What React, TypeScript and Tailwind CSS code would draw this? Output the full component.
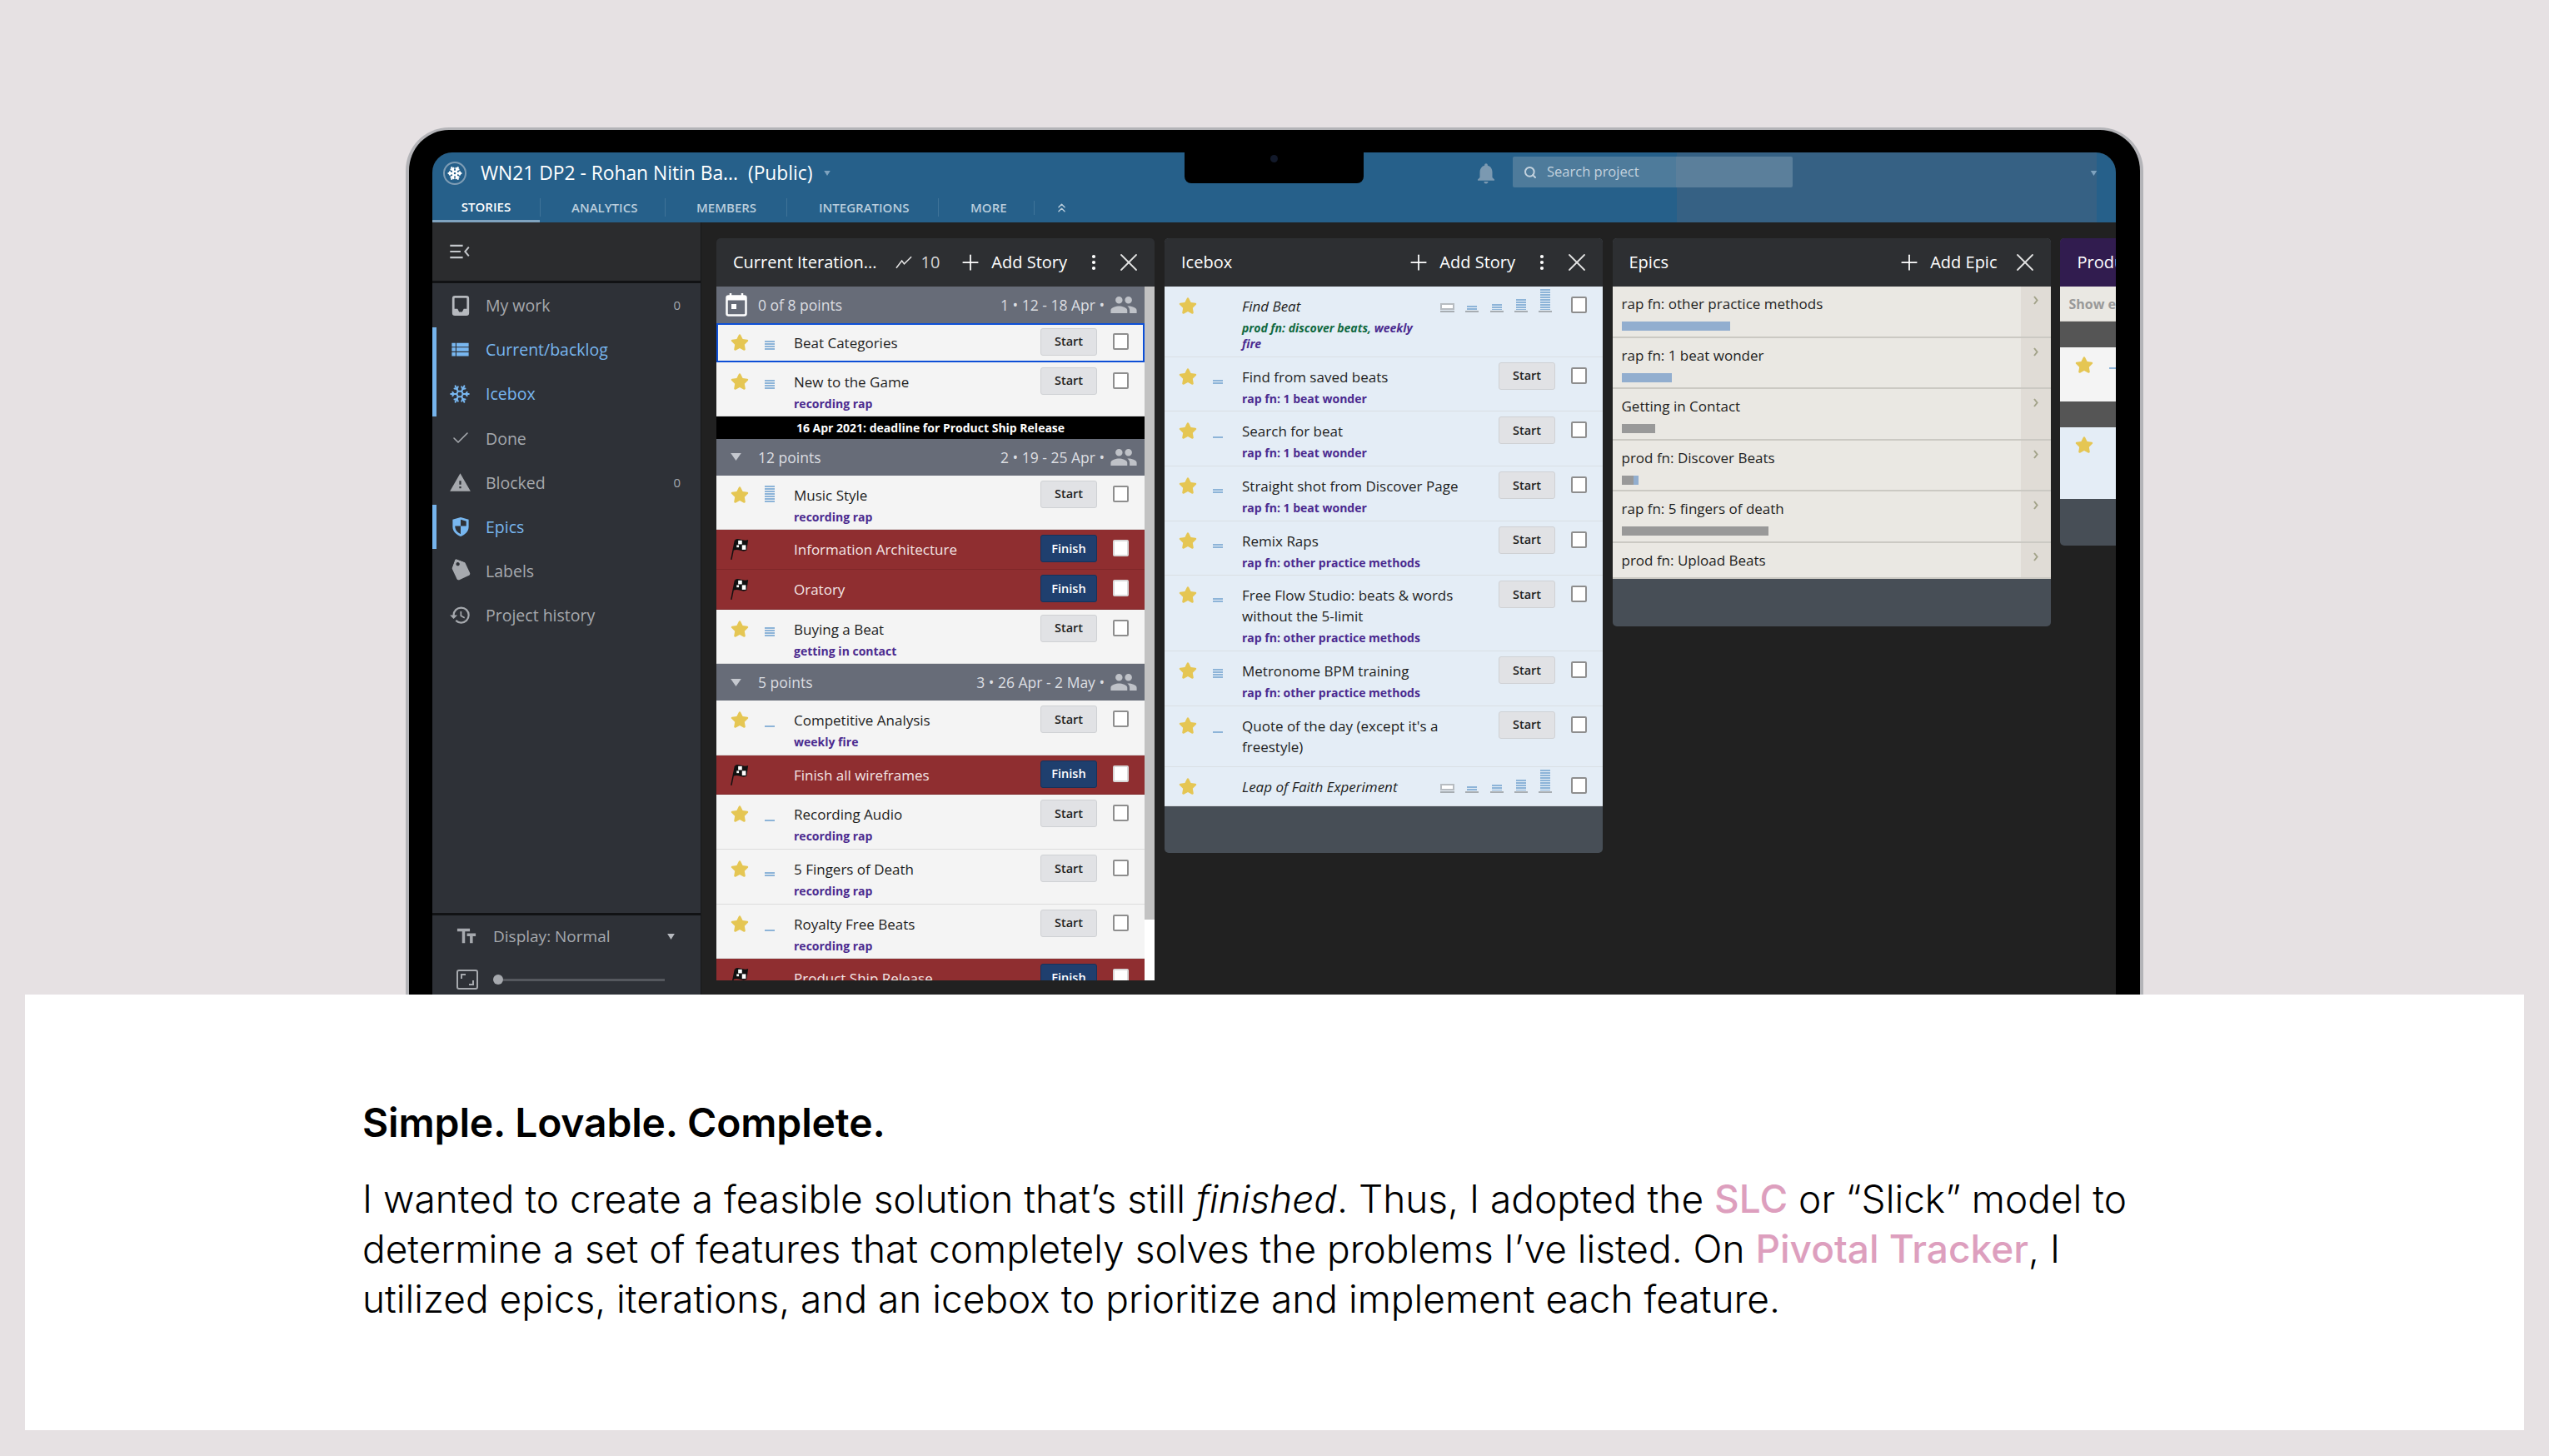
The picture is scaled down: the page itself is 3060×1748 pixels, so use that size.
import { Check, ChevronsUp, EllipsisVertical, Plus, Search, Snowflake, X } from 'lucide-react';
import { FaStar, FaTag } from 'react-icons/fa';
import { MdHistory, MdNotifications, MdPeople, MdTextFields, MdViewList, MdWarning } from 'react-icons/md';

type Story = {
  title: string;
  label?: string;
  points?: number;
  state?: 'start' | 'finish' | 'plan';
  labelAlt?: string;
};

function PointBars({ level, className = '' }: { level: number; className?: string }) {
  const lines = Array.from({ length: level });
  return (
    <div className={`flex w-[12px] flex-col gap-[1px] ${className}`}>
      {lines.map((_, i) => (
        <div key={i} className="h-[2px] w-full bg-[#8db4d8]" />
      ))}
    </div>
  );
}

function Flag() {
  return (
    <svg viewBox="0 0 26 30" className="h-[28px] w-[24px]">
      <path d="M2 29 L7 4" stroke="#111" strokeWidth="1.6" fill="none" />
      <path d="M7 3 C12 0 17 6 24 3 L22 17 C16 20 11 14 5 17 Z" fill="#111" />
      <rect x="11" y="4" width="5" height="5" fill="#fff" />
      <rect x="16" y="10" width="5" height="6" fill="#fff" />
      <rect x="9" y="10" width="3" height="3" fill="#fff" />
    </svg>
  );
}

function PlanEstimates() {
  const heights = [5, 7, 13, 25];
  return (
    <div className="flex w-[134px] items-end justify-between">
      <div className="flex w-[17px] flex-col">
        <div className="h-[8px] border-2 border-[#b7bcc1] bg-white" />
        <div className="mt-[1px] h-[2px] bg-[#a7adb2]" />
      </div>
      {heights.map((h, i) => (
        <div key={i} className="flex w-[16px] flex-col items-center">
          <div
            className="w-[12px] bg-[repeating-linear-gradient(#8db4d8_0,#8db4d8_2px,transparent_2px,transparent_3px)]"
            style={{ height: h }}
          />
          <div className="mt-[1px] h-[2px] w-full bg-[#a7adb2]" />
        </div>
      ))}
    </div>
  );
}

function StoryRow({ story, tone }: { story: Story; tone: 'white' | 'blue' | 'focus' }) {
  const finish = story.state === 'finish';
  const plan = story.state === 'plan';
  const bg = finish
    ? 'bg-[#8f2e30] border-[#7f2729] text-[#f3e6e6]'
    : tone === 'blue'
      ? 'bg-[#e4edf6] border-[#d9dfe4] text-[#1d1d1d]'
      : 'bg-[#f4f4f4] border-[#dcdcdc] text-[#1d1d1d]';
  const focus = tone === 'focus' ? 'outline-2 -outline-offset-2 outline-[#0d4fd6] h-[47px]' : '';
  return (
    <div className={`relative flex border-b pr-[19px] pl-[18px] ${bg} ${focus}`}>
      <div className="flex w-[75px] shrink-0 pt-[12px]">
        {finish ? (
          <div className="-mt-[3px] -ml-[2px]">
            <Flag />
          </div>
        ) : (
          <FaStar className="ml-[-1px] h-[22px] w-[22px] text-[#e5c653]" />
        )}
        {story.points ? (
          <div className="ml-[19px] flex h-[20px] flex-col justify-end">
            <PointBars level={story.points} />
          </div>
        ) : null}
      </div>
      <div className={`min-w-0 flex-1 pt-[11px] ${story.label ? 'pb-[5.7px]' : 'pb-[10.7px]'}`}>
        <div className={`text-[17px] leading-[25px] ${plan ? 'italic' : ''}`}>{story.title}</div>
        {story.label || story.labelAlt ? (
          <div className={`mt-[4px] text-[14px] leading-[19px] font-bold ${plan ? 'max-w-[225px] italic' : ''}`}>
            {story.labelAlt ? <span className="text-[#10693f]">{story.labelAlt}</span> : null}
            {story.labelAlt ? <span className="text-[#10693f]">, </span> : null}
            <span className="text-[#4b2a8f]">{story.label}</span>
          </div>
        ) : null}
      </div>
      <div className="flex shrink-0 items-start pt-[6px]">
        {plan ? (
          <div className="mt-[-3px] mr-[4px]">
            <PlanEstimates />
          </div>
        ) : (
          <button
            className={`h-[33px] w-[68px] rounded-[3px] border text-[14.5px] font-semibold ${
              finish
                ? 'border-[#16315a] bg-[#1f3f6e] text-white'
                : 'border-[#cfd1d4] bg-[#e1e2e5] text-[#222]'
            }`}
          >
            {finish ? 'Finish' : 'Start'}
          </button>
        )}
        <div
          className={`mt-[6px] ml-[19px] h-[20px] w-[19px] rounded-[2px] border-2 bg-white ${
            finish ? 'border-[#d8d8d8]' : 'border-[#8e8e8e]'
          }`}
        />
      </div>
    </div>
  );
}

function IterationHeader({ icon, points, dates }: { icon: 'calendar' | 'caret'; points: string; dates: string }) {
  return (
    <div className="flex h-[43.5px] items-center bg-[#676c78] pr-[8px] pl-[11px] text-[17.5px] text-[#dcdee2]">
      <div className="flex w-[39px] shrink-0 items-center">
        {icon === 'calendar' ? (
          <svg viewBox="0 0 26 28" className="h-[28px] w-[26px]">
            <path d="M6 0v4M20 0v4" stroke="#fff" strokeWidth="2.5" />
            <rect x="1.5" y="3.5" width="23" height="23" rx="2" fill="#676c78" stroke="#fff" strokeWidth="2.5" />
            <rect x="1.5" y="3.5" width="23" height="5" fill="#fff" />
            <rect x="7" y="13" width="6" height="6" fill="#fff" />
          </svg>
        ) : (
          <svg viewBox="0 0 14 10" className="ml-[6px] h-[9px] w-[13px]">
            <path d="M0 0h14L7 10z" fill="#c5c8cf" />
          </svg>
        )}
      </div>
      <span>{points}</span>
      <span className="ml-auto">{dates}</span>
      <MdPeople className="ml-[6px] h-[34px] w-[34px] text-[#bfc2c8]" />
    </div>
  );
}

function ColumnHeader({ title, count, add, menu = true }: { title: string; count?: string; add: string; menu?: boolean }) {
  return (
    <div className="flex h-[58px] shrink-0 items-center rounded-t-[5px] bg-[#2d2f32] pr-[17px] pl-[20px] text-[20px] text-white">
      <span className="whitespace-nowrap">{title}</span>
      {count ? (
        <>
          <svg viewBox="0 0 22 16" className="ml-[22px] h-[16px] w-[21px] shrink-0">
            <path d="M1 15 L8 6 L11 10 L20 1" stroke="#e4e4e4" strokeWidth="1.6" fill="none" />
          </svg>
          <span className="ml-[10px] text-[#d4d4d4]">{count}</span>
        </>
      ) : null}
      <Plus className="-mx-[3px] ml-auto h-[30px] w-[30px] shrink-0" strokeWidth={1.4} />
      <span className="ml-[13px] whitespace-nowrap">{add}</span>
      {menu ? <EllipsisVertical className="ml-[20px] h-[24px] w-[24px] shrink-0" strokeWidth={2.2} /> : null}
      <X
        className={`-mx-[4px] ${menu ? 'ml-[12px]' : 'ml-[15px]'} h-[36px] w-[36px] shrink-0 text-[#e4e4e4]`}
        strokeWidth={1.2}
      />
    </div>
  );
}

function SideItem({
  icon,
  label,
  count,
  active,
}: {
  icon: React.ReactNode;
  label: string;
  count?: string;
  active?: boolean;
}) {
  return (
    <div
      className={`flex h-[53.2px] items-center border-l-[5px] pr-[24px] pl-[18px] text-[19.5px] ${
        active ? 'border-[#76b4ec] text-[#78b7f0]' : 'border-transparent text-[#a6a9ae]'
      }`}
    >
      <div className="flex w-[41px] shrink-0">{icon}</div>
      <span>{label}</span>
      {count ? <span className="ml-auto text-[15px]">{count}</span> : null}
    </div>
  );
}

function EpicChevron() {
  return (
    <svg viewBox="0 0 6 11" className="h-[11px] w-[6px]">
      <path d="M1 1l3.6 4.5L1 10" fill="none" stroke="#a3a38a" strokeWidth="2" />
    </svg>
  );
}

const current1: Story[] = [{ title: 'New to the Game', label: 'recording rap', points: 4 }];
const current2: Story[] = [
  { title: 'Music Style', label: 'recording rap', points: 7 },
  { title: 'Information Architecture', state: 'finish' },
  { title: 'Oratory', state: 'finish' },
  { title: 'Buying a Beat', label: 'getting in contact', points: 4 },
];
const current3: Story[] = [
  { title: 'Competitive Analysis', label: 'weekly fire', points: 1 },
  { title: 'Finish all wireframes', state: 'finish' },
  { title: 'Recording Audio', label: 'recording rap', points: 1 },
  { title: '5 Fingers of Death', label: 'recording rap', points: 2 },
  { title: 'Royalty Free Beats', label: 'recording rap', points: 1 },
  { title: 'Product Ship Release', state: 'finish' },
];
const icebox: Story[] = [
  { title: 'Find Beat', labelAlt: 'prod fn: discover beats', label: 'weekly fire', state: 'plan' },
  { title: 'Find from saved beats', label: 'rap fn: 1 beat wonder', points: 2 },
  { title: 'Search for beat', label: 'rap fn: 1 beat wonder', points: 1 },
  { title: 'Straight shot from Discover Page', label: 'rap fn: 1 beat wonder', points: 2 },
  { title: 'Remix Raps', label: 'rap fn: other practice methods', points: 2 },
  { title: 'Free Flow Studio: beats & words without the 5-limit', label: 'rap fn: other practice methods', points: 2 },
  { title: 'Metronome BPM training', label: 'rap fn: other practice methods', points: 4 },
  { title: "Quote of the day (except it's a freestyle)", points: 1 },
  { title: 'Leap of Faith Experiment', state: 'plan' },
];
const epics = [
  { title: 'rap fn: other practice methods', gray: 0, blue: 130 },
  { title: 'rap fn: 1 beat wonder', gray: 0, blue: 60 },
  { title: 'Getting in Contact', gray: 40, blue: 0 },
  { title: 'prod fn: Discover Beats', gray: 14, blue: 6 },
  { title: 'rap fn: 5 fingers of death', gray: 176, blue: 0 },
  { title: 'prod fn: Upload Beats', gray: 0, blue: 0 },
];

export default function App() {
  return (
    <div className="h-[1748px] w-[3060px] overflow-hidden bg-[#e6e1e3] pt-[153px]">
      {/* laptop */}
      <div className="ml-[487px] h-[1041px] w-[2086px] rounded-t-[52px] border-x-[4px] border-t-[3px] border-[#b4b4b8] bg-black pt-[27px] pr-[29px] pl-[28px] font-['Open_Sans',sans-serif]">
        <div className="relative flex h-full flex-col overflow-hidden rounded-t-[24px] bg-[#212121]">
          {/* notch */}
          <div className="absolute top-0 left-[903px] z-10 h-[37px] w-[215px] rounded-b-[8px] bg-black">
            <div className="mx-auto mt-[3px] h-[9px] w-[9px] rounded-full bg-[#12192a]" />
          </div>

          <header className="relative h-[84px] shrink-0 bg-[#26608a]">
            <div className="absolute top-0 right-[23px] bottom-0 w-[504px] bg-[#366184]" />
            <div className="relative flex h-[50px] items-center pl-[13px] text-white">
              <div className="flex h-[28px] w-[28px] items-center justify-center rounded-full border-2 border-[#7f9db5]">
                <Snowflake className="h-[18px] w-[18px]" strokeWidth={3} />
              </div>
              <span className="ml-[17px] text-[22.8px]">WN21 DP2 - Rohan Nitin Ba...&nbsp;&nbsp;(Public)</span>
              <svg viewBox="0 0 10 8" className="ml-[14px] h-[6px] w-[8px]">
                <path d="M0 0h10L5 8z" fill="#7fa3bf" />
              </svg>
              <MdNotifications className="absolute top-[10px] left-[1250px] h-[30px] w-[30px] text-[#7b99b1]" />
              <div className="absolute top-[5px] left-[1297px] flex h-[37px] w-[336px] items-center rounded-[2px] bg-[linear-gradient(90deg,#4e7b9b_0,#4e7b9b_196px,#5b7f9b_196px)] pl-[13px] text-[16.5px] text-[#c3d2de]">
                <Search className="h-[16px] w-[16px]" strokeWidth={3} />
                <span className="ml-[12px]">Search project</span>
              </div>
              <svg viewBox="0 0 10 8" className="absolute top-[22px] left-[1990px] h-[6px] w-[9px]">
                <path d="M0 0h10L5 8z" fill="#7fa3bf" />
              </svg>
            </div>
            <nav className="relative flex h-[34px] items-start text-[15px] font-semibold text-[#b9cddc]">
              <div className="flex h-[34px] w-[129px] justify-center border-b-[3px] border-[#7fa3bf] pt-[4px] text-white">
                STORIES
              </div>
              <div className="mt-[6px] flex h-[20px] items-center">
                <span className="w-[150px] border-l border-[#3f7398] pl-[37px]">ANALYTICS</span>
                <span className="w-[146px] border-l border-[#3f7398] pl-[37px]">MEMBERS</span>
                <span className="w-[182px] border-l border-[#3f7398] pl-[38px]">INTEGRATIONS</span>
                <span className="w-[115px] border-l border-[#3f7398] pl-[38px]">MORE</span>
                <span className="border-l border-[#3f7398] pl-[24px]">
                  <ChevronsUp className="h-[17px] w-[17px]" strokeWidth={2} />
                </span>
              </div>
            </nav>
          </header>

          <div className="flex min-h-0 flex-1">
            {/* sidebar */}
            <aside className="flex w-[323px] shrink-0 flex-col border-r border-[#17181a] bg-[#2e3137]">
              <div className="flex h-[73px] shrink-0 items-center border-b-[3px] border-[#111214] bg-[#2b2c2e] pl-[20px]">
                <svg viewBox="0 0 28 20" className="h-[18px] w-[26px]">
                  <path d="M1 2h17M1 10h14M1 18h17" stroke="#c4c7cb" strokeWidth="2.4" />
                  <path d="M26 4l-5 6 5 6" stroke="#c4c7cb" strokeWidth="2.2" fill="none" />
                </svg>
              </div>
              <div>
                <SideItem
                  label="My work"
                  count="0"
                  icon={
                    <svg viewBox="0 0 22 26" className="h-[24px] w-[22px]">
                      <rect x="1.5" y="1.5" width="19" height="23" rx="2" fill="none" stroke="#b6b9be" strokeWidth="3" />
                      <path d="M2 17h5l2 4h4l2-4h5v7H2z" fill="#b6b9be" />
                    </svg>
                  }
                />
                <SideItem active label="Current/backlog" icon={<MdViewList className="-ml-[3px] h-[27px] w-[27px]" />} />
                <SideItem active label="Icebox" icon={<Snowflake className="-ml-[3px] h-[26px] w-[26px]" strokeWidth={1.8} />} />
                <SideItem label="Done" icon={<Check className="-ml-[1px] h-[24px] w-[24px]" strokeWidth={1.6} />} />
                <SideItem label="Blocked" count="0" icon={<MdWarning className="-ml-[3px] h-[27px] w-[27px]" />} />
                <SideItem
                  active
                  label="Epics"
                  icon={
                    <svg viewBox="0 0 22 26" className="h-[25px] w-[22px]">
                      <path d="M11 1 L21 4 V13 C21 19 16 23 11 25 C6 23 1 19 1 13 V4 Z" fill="#78b7f0" />
                      <path d="M11 4 L18 6 V12 H11 Z M11 12 H4 C4 17 7 20 11 22 Z" fill="#2e3137" />
                    </svg>
                  }
                />
                <SideItem label="Labels" icon={<FaTag className="h-[23px] w-[23px] rotate-[20deg]" />} />
                <SideItem label="Project history" icon={<MdHistory className="-ml-[3px] h-[27px] w-[27px]" />} />
              </div>
              <div className="mt-auto h-[98px] shrink-0 border-t-[3px] border-[#111214] pt-[5px] pr-[30px] pl-[27px] text-[#a6a9ae]">
                <div className="flex h-[40px] items-center text-[19px]">
                  <MdTextFields className="h-[28px] w-[28px]" />
                  <span className="ml-[18px]">Display: Normal</span>
                  <svg viewBox="0 0 10 8" className="ml-auto h-[7px] w-[11px]">
                    <path d="M0 0h10L5 8z" fill="#b6b9be" />
                  </svg>
                </div>
                <div className="mt-[20px] flex items-center pl-[6px]">
                  <svg viewBox="0 0 26 24" className="-ml-[4px] h-[24px] w-[26px]">
                    <rect x="1" y="1" width="24" height="22" rx="2" fill="none" stroke="#a6a9ae" strokeWidth="2" />
                    <path d="M6 11V6h5M20 13v5h-5" fill="none" stroke="#a6a9ae" strokeWidth="2" />
                  </svg>
                  <div className="ml-[18px] h-[12px] w-[12px] shrink-0 rounded-full bg-[#a6a9ae]" />
                  <div className="h-[3px] w-[194px] bg-[#55585e]" />
                </div>
              </div>
            </aside>

            {/* columns */}
            <main className="flex min-w-0 flex-1 items-start overflow-hidden pt-[19px] pl-[18px]">
              <section className="flex h-[891px] w-[526px] shrink-0 flex-col overflow-hidden">
                <ColumnHeader title="Current Iteration..." count="10" add="Add Story" />
                <div className="flex min-h-0 flex-1 bg-white">
                  <div className="min-w-0 flex-1 overflow-hidden">
                    <IterationHeader icon="calendar" points="0 of 8 points" dates="1 • 12 - 18 Apr •" />
                    <StoryRow story={{ title: 'Beat Categories', points: 4 }} tone="focus" />
                    {current1.map((s) => (
                      <StoryRow key={s.title} story={s} tone="white" />
                    ))}
                    <div className="flex h-[27px] items-center justify-center bg-black text-[14px] font-bold text-white">
                      16 Apr 2021: deadline for Product Ship Release
                    </div>
                    <IterationHeader icon="caret" points="12 points" dates="2 • 19 - 25 Apr •" />
                    {current2.map((s) => (
                      <StoryRow key={s.title} story={s} tone="white" />
                    ))}
                    <IterationHeader icon="caret" points="5 points" dates="3 • 26 Apr - 2 May •" />
                    {current3.map((s) => (
                      <StoryRow key={s.title} story={s} tone="white" />
                    ))}
                  </div>
                  <div className="w-[12px] shrink-0">
                    <div className="h-[760px] bg-[#c2c2c2]" />
                  </div>
                </div>
              </section>

              <section className="ml-[12px] w-[526px] shrink-0 overflow-hidden rounded-[5px] bg-[#474e56]">
                <ColumnHeader title="Icebox" add="Add Story" />
                {icebox.map((s) => (
                  <StoryRow key={s.title} story={s} tone="blue" />
                ))}
                <div className="h-[56px]" />
              </section>

              <section className="ml-[11.5px] w-[526px] shrink-0 overflow-hidden rounded-[5px] bg-[#474e56]">
                <ColumnHeader title="Epics" add="Add Epic" menu={false} />
                {epics.map((e) => (
                  <div key={e.title} className="flex border-b-2 border-[#cbc9c3] bg-[#eae8e3] text-[17px] text-[#1d1d1d]">
                    <div className={`min-w-0 flex-1 pt-[9px] pl-[11px] ${e.gray || e.blue ? 'pb-[6.5px]' : 'pb-[8px]'}`}>
                      <div className="leading-[24px]">{e.title}</div>
                      {e.gray || e.blue ? (
                        <div className="mt-[9px] flex h-[11px]">
                          <div className="bg-[#999999]" style={{ width: e.gray }} />
                          <div className="bg-[#92aecf]" style={{ width: e.blue }} />
                        </div>
                      ) : null}
                    </div>
                    <div className="flex w-[36px] shrink-0 justify-center bg-[#e0dcd6] pt-[11px]">
                      <EpicChevron />
                    </div>
                  </div>
                ))}
                <div className="h-[57px]" />
              </section>

              <section className="ml-[11px] w-[526px] shrink-0 overflow-hidden rounded-[5px] bg-[#474e56]">
                <div className="flex h-[58px] items-center bg-[#311c4f] pl-[21px] text-[20px] text-white">Product</div>
                <div className="flex h-[42px] items-center border-b border-[#d6d3cd] bg-[#eae8e3] pl-[11px] text-[16px] font-bold text-[#999]">
                  Show epics
                </div>
                <div className="h-[31px] bg-[#555555]" />
                <div className="h-[65px] bg-[#f4f4f4] pt-[10px] pl-[18px]">
                  <div className="flex items-center">
                    <FaStar className="h-[22px] w-[22px] text-[#e5c653]" />
                    <div className="mt-[8px] ml-[19px] h-[2px] w-[12px] bg-[#8db4d8]" />
                  </div>
                </div>
                <div className="h-[31px] bg-[#555555]" />
                <div className="h-[86px] bg-[#e4edf6] pt-[10px] pl-[18px]">
                  <FaStar className="h-[22px] w-[22px] text-[#e5c653]" />
                </div>
                <div className="h-[56px]" />
              </section>
            </main>
          </div>
        </div>
      </div>

      {/* caption */}
      <div className="mx-[30px] h-[523px] bg-white pt-[126px] pl-[405px] font-['Inter',sans-serif] text-black">
        <h2 className="text-[48px] leading-[56px] font-semibold tracking-[-0.003em]">Simple. Lovable. Complete.</h2>
        <p className="mt-[33px] text-[46px] leading-[60px] font-light whitespace-nowrap">
          I wanted to create a feasible solution that’s still <em>finished</em>. Thus, I adopted the{' '}
          <span className="font-medium text-[#dd9fbe]">SLC</span> or “Slick” model to
          <br />
          determine a set of features that completely solves the problems I’ve listed. On{' '}
          <span className="font-medium text-[#dd9fbe]">Pivotal Tracker</span>, I
          <br />
          utilized epics, iterations, and an icebox to prioritize and implement each feature.
        </p>
      </div>
    </div>
  );
}
